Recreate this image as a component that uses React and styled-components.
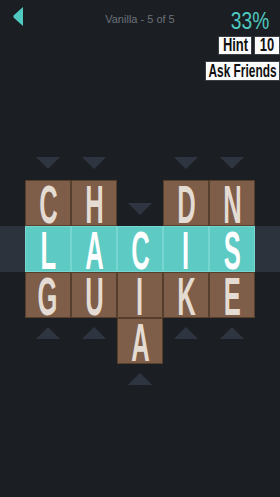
import React from 'react'
import styled, { createGlobalStyle } from 'styled-components'

const Global = createGlobalStyle`
  html, body {
    margin: 0;
    padding: 0;
    background: #1b1f24;
  }
  body {
    font-family: "Liberation Sans", Arial, sans-serif;
  }
`

const Screen = styled.div`
  width: 280px;
  height: 497px;
  overflow: hidden;
  background: #1b1f24;
  display: flex;
  flex-direction: column;
`

const Header = styled.header`
  display: grid;
  grid-template-columns: 1fr auto 1fr;
  align-items: start;
  padding-top: 9px;
  height: 70px;
`

const Back = styled.button`
  justify-self: start;
  background: none;
  border: none;
  padding: 0;
  margin: -2px 0 0 13px;
  width: 11px;
  height: 19px;
  display: flex;
`

const Title = styled.div`
  font-size: 11px;
  line-height: 13px;
  margin-top: 4px;
  color: #6b7078;
`

const Side = styled.div`
  justify-self: end;
  display: flex;
  flex-direction: column;
  align-items: flex-end;
`

const Squeeze = styled.span`
  display: inline-block;
  transform: scaleX(${p => p.$s});
  transform-origin: center;
  white-space: nowrap;
`

const Percent = styled.div`
  color: #4fcac1;
  font-size: 24px;
  line-height: 24px;
  width: 38px;
  margin-right: 11px;
  display: flex;
  justify-content: center;
`

const HintRow = styled.div`
  display: flex;
  gap: 2px;
  margin-top: 3px;
`

const Box = styled.div`
  background: #fbfbfb;
  color: #111;
  border: 1px solid #3a3f45;
  box-sizing: border-box;
  width: ${p => p.$w}px;
  height: ${p => p.$h}px;
  font-size: 18px;
  font-weight: bold;
  line-height: ${p => p.$h - 2}px;
  display: flex;
  justify-content: center;
  overflow: hidden;
`

const AskBox = styled(Box)`
  margin-top: 6px;
`

const Board = styled.div`
  margin-top: 55px;
  display: flex;
  flex-direction: column;
`

const Row = styled.div`
  display: grid;
  grid-template-columns: repeat(5, 46px);
  grid-auto-rows: 46px;
  justify-content: center;
  background: ${p => (p.$band ? '#2c333d' : 'transparent')};
`

const Tile = styled.div`
  box-sizing: border-box;
  background: ${p => (p.$teal ? '#5dcbc3' : '#7e5e48')};
  box-shadow: inset 0 0 0 1px ${p => (p.$teal ? 'rgba(140,225,218,0.55)' : 'rgba(70,48,34,0.7)')};
  color: ${p => (p.$teal ? '#ffffff' : '#e4dbd3')};
  font-size: 40px;
  display: flex;
  justify-content: center;
  align-items: center;
  overflow: hidden;
`

const Letter = styled.span`
  display: inline-block;
  line-height: 34px;
  transform: translateY(2px) scale(0.64, 1.32);
  font-weight: 700;
`

const Slot = styled.div`
  display: flex;
  justify-content: center;
  align-items: ${p => (p.$dir === 'down' ? 'flex-end' : 'flex-start')};
  padding: ${p => (p.$dir === 'down' ? '0 0 11px' : '9px 0 0')};
  box-sizing: border-box;
`

const Arrow = styled.div`
  width: 0;
  height: 0;
  border-left: 12px solid transparent;
  border-right: 12px solid transparent;
  ${p =>
    p.$dir === 'down'
      ? 'border-top: 12px solid #2e3540;'
      : 'border-bottom: 12px solid #2e3540;'}
`

const rows = [
  { cells: ['v', 'v', '', 'v', 'v'] },
  { cells: ['C', 'H', 'v', 'D', 'N'] },
  { cells: ['L', 'A', 'C', 'I', 'S'], teal: true },
  { cells: ['G', 'U', 'I', 'K', 'E'] },
  { cells: ['^', '^', 'A', '^', '^'] },
  { cells: ['', '', '^', '', ''] },
]

const Cell = ({ value, teal }) => {
  if (value === '') return <div />
  if (value === 'v' || value === '^') {
    const dir = value === 'v' ? 'down' : 'up'
    return (
      <Slot $dir={dir}>
        <Arrow $dir={dir} />
      </Slot>
    )
  }
  return (
    <Tile $teal={teal}>
      <Letter>{value}</Letter>
    </Tile>
  )
}

export default function App() {
  return (
    <Screen>
      <Global />
      <Header>
        <Back aria-label="back">
          <svg width="11" height="19" viewBox="0 0 11 19">
            <polygon points="10,0 10,19 0.5,10.5 0.5,8.5" fill="#4fcac1" />
          </svg>
        </Back>
        <Title>Vanilla - 5 of 5</Title>
        <Side>
          <Percent>
            <Squeeze $s={0.8}>33%</Squeeze>
          </Percent>
          <HintRow>
            <Box $w={34} $h={19}>
              <Squeeze $s={0.72}>Hint</Squeeze>
            </Box>
            <Box $w={26} $h={19}>
              <Squeeze $s={0.72}>10</Squeeze>
            </Box>
          </HintRow>
          <AskBox $w={75} $h={20}>
            <Squeeze $s={0.66}>Ask Friends</Squeeze>
          </AskBox>
        </Side>
      </Header>
      <Board>
        {rows.map((r, i) => (
          <Row key={i} $band={r.teal}>
            {r.cells.map((c, j) => (
              <Cell key={j} value={c} teal={r.teal} />
            ))}
          </Row>
        ))}
      </Board>
    </Screen>
  )
}
